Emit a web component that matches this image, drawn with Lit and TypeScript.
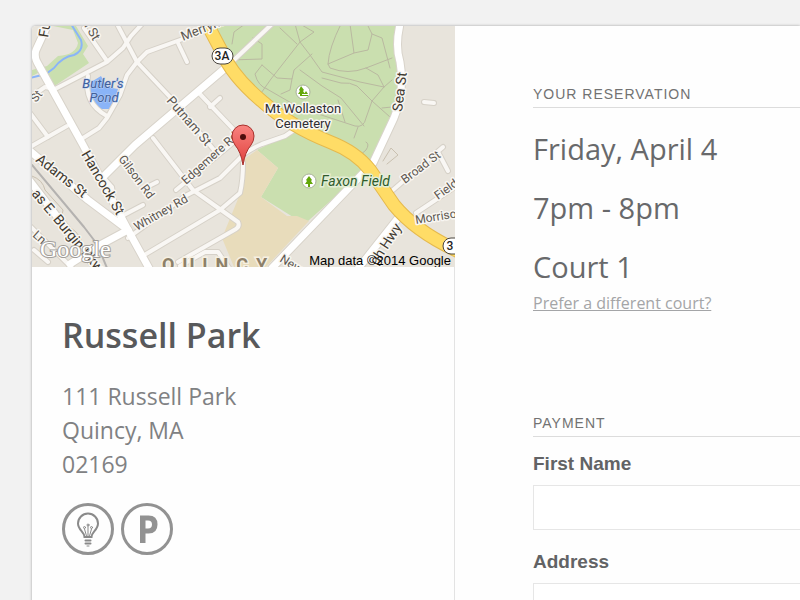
import { LitElement, html, css, svg } from "lit";
import { customElement } from "lit/decorators.js";

const minorRoads = [
  "M32 96L45 87L55 89L107 62L123 48L131 36L142 24",
  "M117 24L137 62L170 97L214 150",
  "M212 28L180 40L147 52L137 62L127 75L120 95L107 118L99 128L83 138",
  "M88 76Q83 103 107 116",
  "M84 28L107 61",
  "M178 43L187 62",
  "M30 113L48 137M67 126L30 147",
  "M198 92L236 132M210 107L220 98",
  "M153 138L193 190L238 222Q240 226 236 229L178 262",
  "M146 254L220 210L240 193Q243 180 243 163",
  "M128 238L187 195L220 178L243 155Q250 149 262 144L285 136L300 126",
  "M176 190L240 137",
  "M147 187L157 182",
  "M122 216L143 205",
  "M103 177L112 187L113 194",
  "M272 24L234 60",
  "M393 190L443 147M438 152L448 171",
  "M416 213L458 185",
  "M418 221L458 215",
  "M424 102L434 103",
  "M30 226L72 268M48 262L34 250",
  "M180 266L205 252L218 252L229 268",
];

const mainRoads = [
  "M48 24L36 50Q34 56 37 62L83 145L128 230L150 270",
  "M30 151L88 200L128 230",
  "M230 64L135 145L102 178",
  "M128 230L100 245L70 264",
  "M400 24Q395 46 400 62Q405 92 394 118L373 163",
  "M371 165L272 268",
  "M399 217L357 270",
  "M30 181L97 269",
];

const highway = "M204 18L222 52Q232 76 263 102Q290 126 330 142Q356 152 370 170L394 205Q416 232 460 252";

const paths =
  "M300 24L314 32L300 42L271 79L259 96L230 60L262 59L262 44L253 38M245 24L234 32L232 44M295 24L300 42L310 55L322 72L360 82L384 87M297 44L280 28M341 24Q329 48 328 64L330 68Q348 75 366 68L392 58M350 24L354 53L328 64M354 53L368 50L372 34L367 24M372 34L382 38L390 68M366 68L378 75L384 87L392 80M262 65L255 74Q258 86 267 89M262 65L277 78L292 79L294 70L312 54M292 79L290 90L281 94M300 70L322 86L341 98L364 126M267 89L300 108L355 126Q364 128 366 118L372 101L384 87M372 101L357 86Q350 82 341 83L322 78M372 101L390 117M338 100L345 122M358 127L354 138M382 108L392 107M366 142Q370 144 366 150L358 157";

interface MapLabel { text: string; x: number; y: number; size: number; angle: number; kind?: string }
const labels: MapLabel[] = [
  { text: "Fu", x: 48, y: 38, size: 14, angle: -80, kind: "dark" },
  { text: "n St", x: 82, y: 22, size: 13, angle: 60 },
  { text: "Merrym", x: 183, y: 41, size: 13, angle: -22 },
  { text: "Putnam St", x: 166, y: 101, size: 13, angle: 49 },
  { text: "St", x: 36, y: 103, size: 12, angle: -52 },
  { text: "Hancock St", x: 81, y: 154, size: 14, angle: 60, kind: "dark" },
  { text: "Adams St", x: 35, y: 161, size: 14, angle: 38, kind: "dark" },
  { text: "Gilson Rd", x: 118, y: 159, size: 12, angle: 53 },
  { text: "Whitney Rd", x: 137, y: 231, size: 12, angle: -30 },
  { text: "Edgemere Rd", x: 186, y: 185, size: 12, angle: -42 },
  { text: "as E. Burgin Pkwy", x: 31, y: 194, size: 14, angle: 50, kind: "dark" },
  { text: "Ln", x: 32, y: 236, size: 12, angle: 42 },
  { text: "Sea St", x: 402, y: 112, size: 14, angle: -83, kind: "dark" },
  { text: "Broad St", x: 405, y: 184, size: 12, angle: -37 },
  { text: "Field", x: 438, y: 200, size: 12, angle: -36 },
  { text: "Morrison", x: 416, y: 224, size: 12, angle: -9 },
  { text: "New", x: 279, y: 261, size: 12, angle: 32 },
  { text: "gh Hwy", x: 377, y: 266, size: 14, angle: -57, kind: "dark" },
];

@customElement("area-map")
class AreaMap extends LitElement {
  static styles = css`
    :host { display: block; }
    .map { display: block; width: 100%; height: auto; background: #e8e4dc; }
    .land { fill: #e8e4dc; }
    .park { fill: #cadfaf; }
    .school { fill: #e8dcbb; }
    .water { fill: #8ab4f8; }
    .line { fill: none; stroke-linecap: round; stroke-linejoin: round; }
    .stream { stroke: #8ab4f8; stroke-width: 2; }
    .path { stroke: #b9b8a0; stroke-width: 1; }
    .rail { stroke: #b4b2b0; stroke-width: 2; }
    .track { stroke: #c9c0b0; stroke-width: 1; }
    .minor-edge { stroke: #d6d1c8; stroke-width: 6; }
    .minor { stroke: #f9f7f4; stroke-width: 4; }
    .main-edge { stroke: #d8d3ca; stroke-width: 9; }
    .main { stroke: #ffffff; stroke-width: 7; }
    .highway-edge { stroke: #e5b94e; stroke-width: 14; }
    .highway { stroke: #ffdc66; stroke-width: 12; }
    text { font-family: Roboto, "Noto Sans", sans-serif; }
    .label { fill: #5c5750; stroke: #f8f6f2; stroke-width: 3; paint-order: stroke; stroke-linejoin: round; }
    .dark { fill: #40392f; }
    .place { fill: #2f2d33; font-size: 13px; text-anchor: middle; }
    .pond { fill: #3f5f9c; stroke: #b9cef2; stroke-width: 1; font-size: 13px; font-style: italic; text-anchor: middle; paint-order: stroke; }
    .field { fill: #2f5b2b; stroke: #e4eed6; stroke-width: 3; font-size: 14px; font-style: italic; paint-order: stroke; }
    .city { fill: #8d8069; stroke: #f6f0e2; stroke-width: 3; paint-order: stroke; font-size: 18px; font-weight: 700; letter-spacing: 8px; }
    .shield { fill: #ffffff; stroke: #49443e; stroke-width: 1; }
    .route { fill: #222222; font-size: 12px; font-weight: 500; text-anchor: middle; }
    .badge { fill: #ffffff; stroke: #a9b29a; stroke-width: 1; }
    .tree { fill: #63a70a; }
    .logo { font-family: "Liberation Serif", serif; font-size: 24px; fill: #ffffff; stroke: #a29e99; stroke-width: 2; paint-order: stroke; }
    .credit { font-family: "Liberation Sans", sans-serif; font-size: 13px; fill: #000000; text-anchor: end; }
    .pin { fill: url(#pin-fill); stroke: #a8302c; stroke-width: 1; }
    .pin-dot { fill: #4d0d0c; }
  `;

  render() {
    return html`
      <svg class="map" viewBox="32 26 423 241" role="img" aria-label="Map of Russell Park and its surroundings">
        <defs>
          <linearGradient id="pin-fill" x1="0" y1="0" x2="0" y2="1">
            <stop offset="0" stop-color="#f98480"></stop>
            <stop offset="1" stop-color="#e0403c"></stop>
          </linearGradient>
        </defs>
        <path class="park" d="M53 26H76L88 46L83 54L89 63L53 87L40 72L32 76V70L47 66L58 56Q76 55 78 43L73 30Z"></path>
        <path class="line stream" d="M71 24L81 40Q84 51 74 55Q62 57 54 68L46 74L30 78"></path>
        <path class="water" d="M91 82L101 76L107 87L118 89L115 98L111 109L101 109L94 104L90 93Z"></path>
        <path class="park" d="M209 26H400Q395 46 400 62Q404 92 393 118L373 163L308 221L293 217L261 197L278 168L257 150L300 128L236 74Z"></path>
        <path class="land" d="M209 26L236 76L262 104L300 128L262 144L246 147L225 100Z"></path>
        <path class="school" d="M243 160L257 150L278 168L261 197L287 216L297 216L309 221L266 267H234L222 238L240 194Z"></path>
        <path class="line path" d=${paths}></path>
        <path class="line track" d="M32 176Q43 180 45 190L63 210Q60 220 68 226Q85 236 82 250"></path>
        <path class="line rail" d="M32 165L84 227L97 244L107 268"></path>
        <path class="line track" d="M383 161L391 148L398 155L387 164"></path>
        ${minorRoads.map((d) => svg`<path class="line minor-edge" d=${d}></path>`)}
        ${mainRoads.map((d) => svg`<path class="line main-edge" d=${d}></path>`)}
        ${minorRoads.map((d) => svg`<path class="line minor" d=${d}></path>`)}
        ${mainRoads.map((d) => svg`<path class="line main" d=${d}></path>`)}
        <path class="line highway-edge" d=${highway}></path>
        <path class="line highway" d=${highway}></path>
        ${labels.map((l) => svg`<text class="label ${l.kind ?? ""}" font-size=${l.size}
          transform="translate(${l.x} ${l.y}) rotate(${l.angle})">${l.text}</text>`)}
        <text class="pond" x="103" y="88">Butler's</text>
        <text class="pond" x="104" y="102">Pond</text>
        <text class="label place" x="303" y="113">Mt Wollaston</text>
        <text class="label place" x="303" y="128">Cemetery</text>
        <text class="field" x="321" y="186">Faxon Field</text>
        <circle class="badge" cx="303" cy="92" r="7"></circle>
        <path class="tree" d="M301 86L304 90L303 91L305 94H302V96H300V94H298L300 91L299 90ZM302 95H308V96H302ZM306 91L308 94H304Z"></path>
        <circle class="badge" cx="309" cy="181" r="7"></circle>
        <path class="tree" d="M309 176L312 180L311 181L313 184H310V187H308V184H305L307 181L306 180Z"></path>
        <rect class="shield" x="212" y="48" width="21" height="16" rx="8"></rect>
        <text class="route" x="222" y="60">3A</text>
        <rect class="shield" x="443" y="238" width="21" height="16" rx="8"></rect>
        <text class="route" x="450" y="250">3</text>
        <text class="city" x="162" y="271">QUINCY</text>
        <text class="logo" x="40" y="257">Google</text>
        <text class="credit" x="451" y="265">Map data ©2014 Google</text>
        <path class="pin" d="M243 165Q241 152 235 145Q232 141 232 136A11 11 0 0 1 254 136Q254 141 251 145Q245 152 243 165Z"></path>
        <circle class="pin-dot" cx="243" cy="137" r="3"></circle>
      </svg>
    `;
  }
}

@customElement("app-root")
class AppRoot extends LitElement {
  static styles = css`
    :host { display: block; box-sizing: border-box; min-height: 100vh; padding: 26px 0 0 32px; background: #f2f2f2; overflow: hidden;
      font-family: "Open Sans", "Noto Sans", sans-serif; color: #58595b; }
    * { box-sizing: border-box; }
    .card { display: grid; grid-template-columns: minmax(0, 423fr) minmax(0, 345fr); min-height: calc(100vh - 26px);
      background: #fefefe; border-radius: 4px 0 0 0; box-shadow: 0 0 3px rgba(0, 0, 0, 0.35); overflow: hidden; }
    .venue { border-right: 1px solid #e3e3e3; }
    .venue-map { margin-right: -1px; }
    .details { padding: 44px 30px 0; }
    h1 { margin: 0; font-size: 34px; line-height: 48px; font-weight: 600; }
    address { margin: 20px 0 0; font-size: 23px; line-height: 34px; font-style: normal; font-weight: 400; color: #808183; }
    .amenities { display: flex; gap: 7px; margin: 22px 0 0; padding: 0; list-style: none; }
    .amenity { display: block; width: 52px; height: 52px; }
    .ring { fill: none; stroke: #929292; stroke-width: 3; }
    .bulb { fill: none; stroke: #8a8a8a; stroke-width: 1; stroke-linecap: round; }
    .glass { stroke-width: 2; }
    .parking { fill: #929292; fill-rule: evenodd; }
    .booking { padding: 58px 0 0 78px; }
    h2 { margin: 0; border-bottom: 1px solid #dcdcdc; padding-bottom: 3px; font: 400 14px/20px "Liberation Sans", Arial, sans-serif;
      letter-spacing: 1px; color: #727272; white-space: nowrap; }
    .summary { margin: 0; padding: 11px 0 0; list-style: none; font-size: 29px; line-height: 59px; font-weight: 400; color: #68696b; }
    .change { display: block; width: max-content; margin-top: -4px; font-size: 16px; line-height: 22px; font-weight: 400; color: #a4a5a7; text-decoration: underline; }
    .payment { margin-top: 99px; }
    label { display: block; margin-top: 15px; font: 700 19px/24px "Liberation Sans", Arial, sans-serif; color: #626365; }
    input { display: block; width: calc(100% + 4px); height: 45px; margin-top: 9px; border: 1px solid #e6e6e6; border-radius: 0; padding: 0 12px;
      background: #ffffff; font: 400 19px/24px "Liberation Sans", Arial, sans-serif; color: #58595b; outline: none; }
    input:focus { border-color: #929292; }
    .next { margin-top: 20px; }
  `;

  render() {
    return html`
      <main class="card">
        <section class="venue">
          <area-map class="venue-map"></area-map>
          <div class="details">
            <h1>Russell Park</h1>
            <address>111 Russell Park<br />Quincy, MA<br />02169</address>
            <ul class="amenities">
              <li>
                <svg class="amenity" viewBox="0 0 52 52" role="img" aria-label="Lights">
                  <circle class="ring" cx="26" cy="26" r="24.5"></circle>
                  <path class="bulb glass" d="M22.500 34C22.500 29 16 27 16 20.500A10 10 0 0 1 36 20.500C36 27 29.500 29 29.500 34Z"></path>
                  <path class="bulb" d="M24.500 33L22.500 26M27.500 33L29.500 26M26 33V23"></path>
                  <circle class="bulb" cx="22.5" cy="24.5" r="1"></circle>
                  <circle class="bulb" cx="29.5" cy="24.5" r="1"></circle>
                  <circle class="bulb" cx="26" cy="22" r="1"></circle>
                  <path class="bulb glass" d="M23.500 37.500H28.500M23.500 40.500H28.500"></path>
                  <path class="bulb" d="M25 43H27"></path>
                </svg>
              </li>
              <li>
                <svg class="amenity" viewBox="0 0 52 52" role="img" aria-label="Parking">
                  <circle class="ring" cx="26" cy="26" r="24.5"></circle>
                  <path class="parking" d="M19 12.500H27.500Q36.500 12.500 36.500 21.500Q36.500 30.500 27.500 30.500H24.500V40H19ZM24.500 17.500V25.500H27Q31 25.500 31 21.500Q31 17.500 27 17.500Z"></path>
                </svg>
              </li>
            </ul>
          </div>
        </section>
        <section class="booking">
          <h2>YOUR RESERVATION</h2>
          <ul class="summary">
            <li>Friday, April 4</li>
            <li>7pm - 8pm</li>
            <li>Court 1</li>
          </ul>
          <a class="change" href="#courts">Prefer a different court?</a>
          <form class="payment">
            <h2>PAYMENT</h2>
            <label for="first-name">First Name</label>
            <input id="first-name" name="first-name" type="text" autocomplete="given-name" />
            <label class="next" for="address">Address</label>
            <input id="address" name="address" type="text" autocomplete="street-address" />
          </form>
        </section>
      </main>
    `;
  }
}
